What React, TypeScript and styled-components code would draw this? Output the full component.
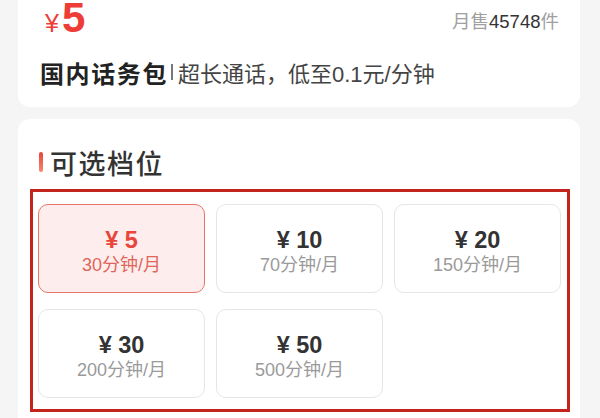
import styled, { createGlobalStyle } from "styled-components";

const GlobalStyle = createGlobalStyle`
  html, body {
    margin: 0;
    padding: 0;
    background: #f5f5f5;
    font-family: "Liberation Sans", "Noto Sans CJK SC", sans-serif;
  }
`;

const Page = styled.div`
  display: flex;
  flex-direction: column;
  gap: 12px;
  padding: 0 20px 0 18px;
  height: 418px;
  overflow: hidden;
  box-sizing: border-box;
`;

const ProductCard = styled.div`
  background: #fff;
  border-radius: 0 0 12px 12px;
  padding: 1px 21px 0 22px;
  height: 107px;
  box-sizing: border-box;
`;

const PriceRow = styled.div`
  display: flex;
  align-items: center;
  justify-content: space-between;
  height: 38px;
`;

const BigPrice = styled.div`
  display: flex;
  align-items: baseline;
  color: #ee3d37;
  padding-left: 5px;
  line-height: 38px;
`;

const Currency = styled.span`
  font-size: 25px;
  margin-right: 3px;
`;

const Amount = styled.span`
  font-size: 42px;
  font-weight: 700;
`;

const Sold = styled.div`
  font-size: 18.5px;
  color: #a0a0a0;
`;

const SoldCount = styled.span`
  color: #333;
`;

const NameRow = styled.div`
  display: flex;
  align-items: center;
  margin-top: 18px;
  height: 30px;
`;

const Name = styled.span`
  font-size: 24px;
  font-weight: 700;
  color: #222;
  letter-spacing: 1.6px;
`;

const Divider = styled.span`
  width: 2px;
  height: 16px;
  background: #777;
  margin: 0 5px 0 3px;
`;

const Slogan = styled.span`
  font-size: 22px;
  color: #444;
`;

const OptionsCard = styled.div`
  flex: 1;
  background: #fff;
  border-radius: 12px 12px 0 0;
  padding: 26px 10px 0 12px;
`;

const SectionTitle = styled.div`
  display: flex;
  align-items: center;
  height: 34px;
  margin-bottom: 10px;
  font-size: 27px;
  font-weight: 500;
  color: #333;
  letter-spacing: 1.5px;
`;

const TitleBar = styled.span`
  width: 4px;
  height: 20px;
  border-radius: 2px;
  margin: 0 7px 0 9px;
  background: linear-gradient(#e8443a, #f6866f);
`;

const Frame = styled.div`
  border: 3px solid #c3241c;
  padding: 12px 6px 11px 5px;
  display: grid;
  grid-template-columns: repeat(3, 1fr);
  column-gap: 11px;
  row-gap: 16px;
`;

const Option = styled.div<{ $active?: boolean }>`
  height: 89px;
  box-sizing: border-box;
  border-radius: 10px;
  border: 1.5px solid ${(p) => (p.$active ? "#e6766b" : "#e6e6e6")};
  background: ${(p) => (p.$active ? "#fdeeed" : "#fff")};
  display: flex;
  flex-direction: column;
  align-items: center;
  justify-content: center;
  padding-top: 6px;
`;

const OptionPrice = styled.div<{ $active?: boolean }>`
  font-size: 23.5px;
  font-weight: 700;
  line-height: 26px;
  color: ${(p) => (p.$active ? "#e8453b" : "#333")};
`;

const OptionMinutes = styled.div<{ $active?: boolean }>`
  font-size: 18px;
  line-height: 24px;
  color: ${(p) => (p.$active ? "#e0655a" : "#9a9a9a")};
`;

const options = [
  { price: 5, minutes: 30 },
  { price: 10, minutes: 70 },
  { price: 20, minutes: 150 },
  { price: 30, minutes: 200 },
  { price: 50, minutes: 500 },
];

export default function App() {
  const selected = 5;
  return (
    <>
      <GlobalStyle />
      <Page>
        <ProductCard>
          <PriceRow>
            <BigPrice>
              <Currency>¥</Currency>
              <Amount>5</Amount>
            </BigPrice>
            <Sold>
              月售<SoldCount>45748</SoldCount>件
            </Sold>
          </PriceRow>
          <NameRow>
            <Name>国内话务包</Name>
            <Divider />
            <Slogan>超长通话，低至0.1元/分钟</Slogan>
          </NameRow>
        </ProductCard>
        <OptionsCard>
          <SectionTitle>
            <TitleBar />
            可选档位
          </SectionTitle>
          <Frame>
            {options.map((o) => {
              const active = o.price === selected;
              return (
                <Option key={o.price} $active={active}>
                  <OptionPrice $active={active}>¥ {o.price}</OptionPrice>
                  <OptionMinutes $active={active}>{o.minutes}分钟/月</OptionMinutes>
                </Option>
              );
            })}
          </Frame>
        </OptionsCard>
      </Page>
    </>
  );
}
